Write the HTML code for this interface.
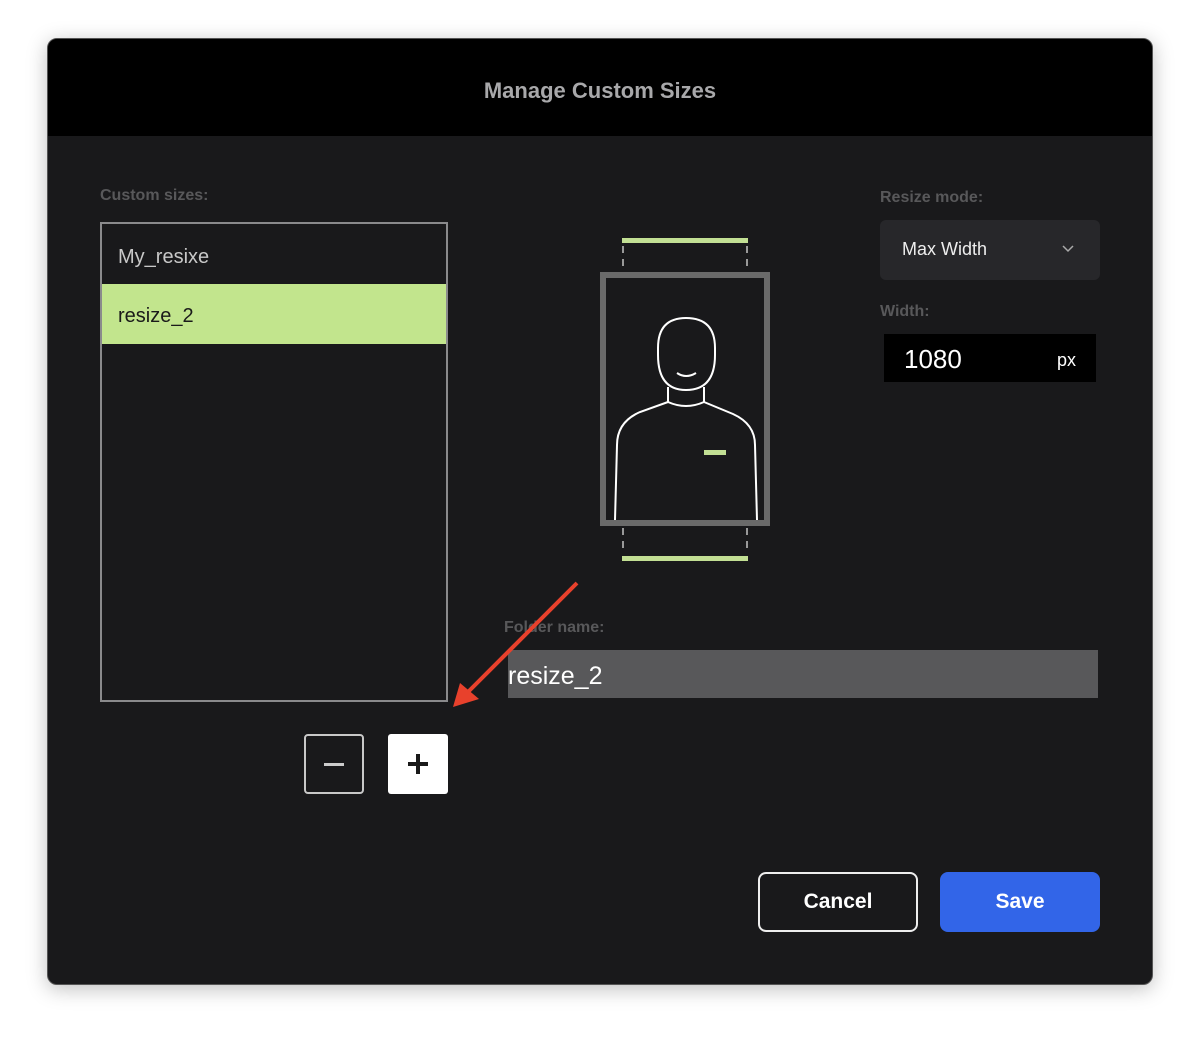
<!DOCTYPE html>
<html><head><meta charset="utf-8"><style>
body{margin:0;width:1200px;height:1040px;background:#fff;font-family:"Liberation Sans",sans-serif;position:relative;overflow:hidden}
.win{position:absolute;left:47px;top:38px;width:1106px;height:947px;background:#19191b;border-radius:10px;overflow:hidden;box-shadow:0 4px 20px rgba(0,0,0,.25);border:1px solid #555;box-sizing:border-box}
.hdr{position:absolute;left:0;top:0;width:100%;height:97px;background:#000;color:#a8a8aa;font-size:22px;font-weight:bold;text-align:center;line-height:104px}
.lbl{position:absolute;color:#58585a;font-size:16px;font-weight:bold}
.abs{position:absolute}
</style></head><body>
<div class="win">
<div class="hdr">Manage Custom Sizes</div>
</div>
<div class="lbl" style="left:100px;top:187px">Custom sizes:</div>
<div class="abs" style="left:100px;top:222px;width:348px;height:480px;border:2px solid #8a8a8c;box-sizing:border-box">
 <div style="height:60px;line-height:66px;padding-left:16px;color:#c8c8c8;font-size:20px">My_resixe</div>
 <div style="height:60px;line-height:64px;padding-left:16px;background:#c2e58d;color:#1a1a1a;font-size:20px">resize_2</div>
</div>
<div class="abs" style="left:304px;top:734px;width:60px;height:60px;border:2px solid #c8c8c8;border-radius:4px;box-sizing:border-box"><div class="abs" style="left:18px;top:27px;width:20px;height:3px;background:#ccc"></div></div>
<div class="abs" style="left:388px;top:734px;width:60px;height:60px;background:#fff;border-radius:3px"><div class="abs" style="left:20px;top:28px;width:20px;height:4px;background:#1a1a1a"></div><div class="abs" style="left:28px;top:20px;width:4px;height:20px;background:#1a1a1a"></div></div>
<div class="lbl" style="left:880px;top:189px">Resize mode:</div>
<div class="abs" style="left:880px;top:220px;width:220px;height:60px;background:#27272a;border-radius:6px;color:#eee;font-size:18px;line-height:58px;padding-left:22px;box-sizing:border-box">Max Width</div>
<div class="lbl" style="left:880px;top:303px">Width:</div>
<div class="abs" style="left:884px;top:334px;width:212px;height:48px;background:#000;color:#fff">
 <span class="abs" style="left:20px;top:10px;font-size:26px">1080</span>
 <span class="abs" style="left:173px;top:16px;font-size:18px">px</span>
</div>
<div class="lbl" style="left:504px;top:619px">Folder name:</div>
<div class="abs" style="left:508px;top:650px;width:590px;height:48px;background:#58585a;color:#fff;font-size:25px;line-height:52px">resize_2</div>
<div class="abs" style="left:758px;top:872px;width:160px;height:60px;border:2px solid #eee;border-radius:8px;box-sizing:border-box;color:#fff;font-size:21px;font-weight:bold;text-align:center;line-height:56px">Cancel</div>
<div class="abs" style="left:940px;top:872px;width:160px;height:60px;background:#3265e8;border-radius:8px;color:#fff;font-size:21px;font-weight:bold;text-align:center;line-height:60px">Save</div>
<svg class="abs" style="left:0;top:0" width="1200" height="1040">
 <rect x="622" y="238" width="126" height="5" fill="#c2df94"/>
 <rect x="622" y="556" width="126" height="5" fill="#c2df94"/>
 <g stroke="#999" stroke-width="2" stroke-dasharray="7,6">
  <line x1="623" y1="246" x2="623" y2="272"/><line x1="747" y1="246" x2="747" y2="272"/>
  <line x1="623" y1="528" x2="623" y2="554"/><line x1="747" y1="528" x2="747" y2="554"/>
 </g>
 <rect x="603" y="275" width="164" height="248" fill="none" stroke="#6a6a6a" stroke-width="6"/>
 <g fill="none" stroke="#fff" stroke-width="2">
  <path d="M658 348 Q658 318 686 318 Q715 318 715 348 L715 355 Q715 390 686 390 Q658 390 658 355 Z"/>
  <path d="M677 373 Q686 379 696 373"/>
  <path d="M668 387 L668 402 Q686 410 704 402 L704 387"/>
  <path d="M668 402 L640 412 Q617 422 617 445 L615 520"/>
  <path d="M704 402 L733 414 Q755 424 755 445 L757 520"/>
 </g>
 <rect x="704" y="450" width="22" height="5" fill="#c2df94"/>
 <line x1="577" y1="583" x2="468" y2="692" stroke="#e8412c" stroke-width="4"/>
 <polygon points="453,707 460,683 479,699" fill="#e8412c"/>
 <path d="M1063 246 L1068 251 L1073 246" fill="none" stroke="#aaa" stroke-width="1.5"/>
</svg>
</body></html>
